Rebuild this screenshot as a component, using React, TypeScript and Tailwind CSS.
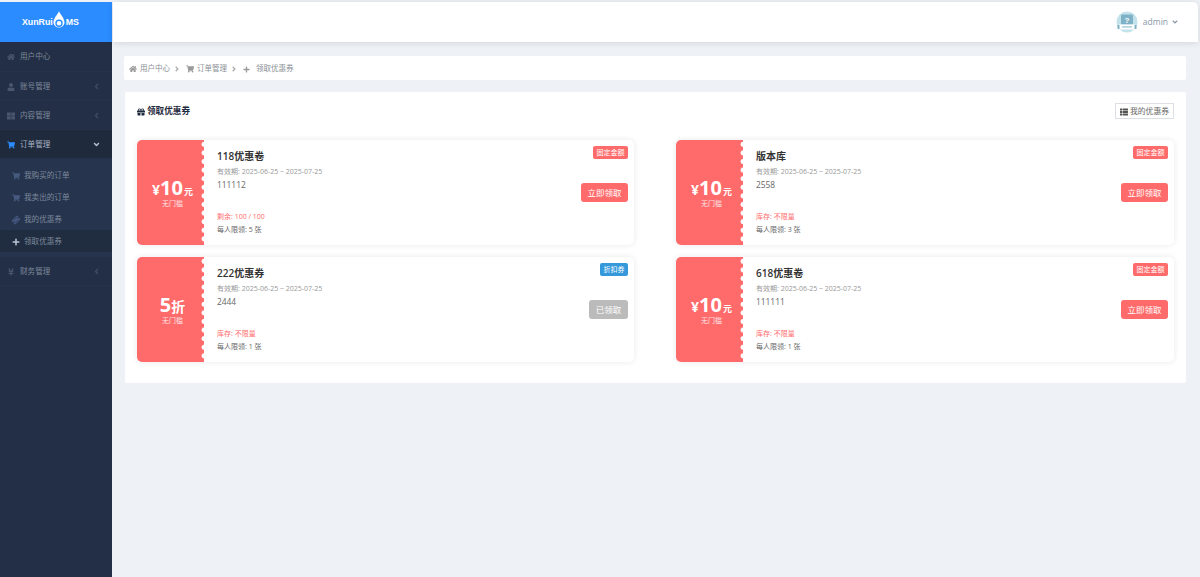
import React from "react";
import { FaHome, FaUser, FaThLarge, FaShoppingCart, FaTicketAlt, FaPlus, FaYenSign, FaGift, FaThList, FaAngleLeft, FaAngleDown, FaAngleRight } from "react-icons/fa";

const font = "[font-family:'Open_Sans','Noto_Sans_CJK_SC',sans-serif]";

function TopItem({ icon, label, arrow = true, active = false, h = "h-[29px]" }: { icon: React.ReactNode; label: string; arrow?: boolean; active?: boolean; h?: string }) {
  return (
    <div className={`flex items-center ${h} pt-[1px] pl-[7px] pr-[11px] border-b border-[#263249] ${active ? "bg-[#1f2a3d] text-[#a9b4c4]" : "text-[#7d899b]"}`}>
      <span className={`w-[13px] flex justify-start text-[8px] ${active ? "text-[#2a8cff]" : "text-[#4a566b]"}`}>{icon}</span>
      <span className="text-[7.6px] leading-none">{label}</span>
      {arrow && (
        <span className="ml-auto text-[9px]">
          {active ? <FaAngleDown className="text-[#b8c2d0]" /> : <FaAngleLeft className="text-[#3f4c62]" />}
        </span>
      )}
    </div>
  );
}

function SubItem({ icon, label, active = false }: { icon: React.ReactNode; label: string; active?: boolean }) {
  return (
    <div className={`flex items-center h-[22px] pt-[1px] pl-[12px] ${active ? "bg-[#202c40]" : ""}`}>
      <span className={`w-[12px] text-[8px] ${active ? "text-[#b9c4d3]" : "text-[#465a80]"}`}>{icon}</span>
      <span className="text-[7.6px] leading-none text-[#7d899b]">{label}</span>
    </div>
  );
}

function Sidebar() {
  return (
    <aside className="w-[112px] shrink-0 flex flex-col bg-[#232f46] mt-[2px]">
      <div className="h-[40px] bg-[#2a8cff] flex items-center justify-center pr-[11px] text-white font-bold text-[8.8px] [font-family:'Liberation_Sans',sans-serif]">
        <span className="mt-[2px]">XunRui</span>
        <svg width="14" height="19" viewBox="0 0 14 19" className="mt-[-3px] mx-[-0.5px]">
          <path d="M7 0 C7.6 3 12.5 6.5 12.5 12 A5.7 6 0 0 1 1.5 12 C1.5 6.5 6.4 3 7 0Z" fill="#fff" />
          <circle cx="7" cy="12.3" r="3" fill="none" stroke="#2a8cff" strokeWidth="1.4" />
        </svg>
        <span className="mt-[2px]">MS</span>
      </div>
      <TopItem icon={<FaHome />} label="用户中心" arrow={false} h="h-[30px]" />
      <TopItem icon={<FaUser />} label="账号管理" />
      <TopItem icon={<FaThLarge />} label="内容管理" />
      <TopItem icon={<FaShoppingCart />} label="订单管理" active />
      <div className="bg-[#26344e] py-[5px]">
        <SubItem icon={<FaShoppingCart />} label="我购买的订单" />
        <SubItem icon={<FaShoppingCart />} label="我卖出的订单" />
        <SubItem icon={<FaTicketAlt className="-rotate-45" />} label="我的优惠券" />
        <SubItem icon={<FaPlus />} label="领取优惠券" active />
      </div>
      <TopItem icon={<FaYenSign />} label="财务管理" />
    </aside>
  );
}

function Header() {
  return (
    <header className="h-[40px] mt-[2px] mr-[2px] bg-white rounded-tr-[5px] shadow-[0_1px_6px_rgba(0,0,0,0.12)] flex items-center justify-end pr-[19px]">
      <svg width="22" height="22" viewBox="0 0 22 22" className="mr-[5px]">
        <circle cx="11" cy="11" r="10.5" fill="#c3e2ec" />
        <rect x="5" y="3.5" width="12" height="10" rx="1" fill="#7fb2c6" />
        <text x="11" y="11.5" textAnchor="middle" fontSize="8" fontWeight="700" fill="#fff" fontFamily="Liberation Sans">?</text>
        <rect x="2.5" y="13.5" width="17" height="5" rx="1" fill="#fff" />
        <rect x="1.5" y="14" width="2" height="4" fill="#7fb2c6" />
        <rect x="18.5" y="14" width="2" height="4" fill="#7fb2c6" />
        <rect x="6" y="15.2" width="10" height="1.4" fill="#a5cbd8" />
      </svg>
      <span className="text-[8.5px] text-[#8a98ab]">admin</span>
      <FaAngleDown className="text-[8px] text-[#8a98ab] ml-[3px]" />
    </header>
  );
}

function Crumb() {
  return (
    <div className="h-[24px] mr-[14px] ml-[11px] mt-[14px] pt-[2px] bg-white rounded-[2px] flex items-center pl-[5px] text-[7.5px] text-[#8a8f96]">
      <FaHome className="text-[8px] text-[#999] mr-[3px]" />
      <span>用户中心</span>
      <FaAngleRight className="text-[8px] text-[#aaa] mx-[3px]" />
      <FaShoppingCart className="text-[8px] text-[#999] mr-[3px] ml-[2px]" />
      <span>订单管理</span>
      <FaAngleRight className="text-[8px] text-[#aaa] mx-[3px]" />
      <FaPlus className="text-[7px] text-[#999] mr-[6px] ml-[2px]" />
      <span>领取优惠券</span>
    </div>
  );
}

type C = { name: string; code: string; amount: React.ReactNode; tag: string; blue?: boolean; stock: string; limit: string; taken?: boolean };

function Coupon({ c }: { c: C }) {
  return (
    <div className="relative h-[105px] flex bg-white rounded-[5px] shadow-[0_0_6px_rgba(0,0,0,0.09)]">
      <div className="relative w-[67px] shrink-0 bg-[#ff6b6b] rounded-l-[5px] flex flex-col items-center justify-center text-white pl-[4px] pb-[1px]">
        <div className="leading-none font-semibold flex items-baseline">{c.amount}</div>
        <div className="text-[7px] leading-none mt-[2px] text-[#ffe3e3]">无门槛</div>
        <div className="absolute right-0 top-0 bottom-0 w-[3px] bg-[radial-gradient(circle_at_100%_50%,#ffffff_2.2px,transparent_2.8px)] bg-[length:3px_8.6px]" />
      </div>
      <div className="flex-1 min-w-0 pl-[13px] pt-[10px] flex flex-col">
        <div className="text-[10px] leading-[13px] font-semibold text-[#333]">{c.name}</div>
        <div className="text-[7px] leading-[10px] mt-[4px] text-[#999]">有效期: 2025-06-25 ~ 2025-07-25</div>
        <div className="text-[8.4px] leading-[11px] mt-[2px] text-[#666]">{c.code}</div>
        <div className="text-[7px] leading-[10px] mt-[22px] text-[#ff6b6b]">{c.stock}</div>
        <div className="text-[7px] leading-[10px] mt-[3px] text-[#666]">{c.limit}</div>
      </div>
      <span className={`absolute top-[6px] right-[6px] h-[13px] px-[3.5px] rounded-[2px] text-white text-[7px] leading-[13px] ${c.blue ? "bg-[#3498db]" : "bg-[#ff6b6b]"}`}>{c.tag}</span>
      <span className={`absolute top-[43px] right-[6px] h-[19px] rounded-[3px] text-white text-[8.5px] leading-[19px] text-center ${c.taken ? "w-[39px] bg-[#bbbbbb]" : "w-[47px] bg-[#ff6b6b]"}`}>{c.taken ? "已领取" : "立即领取"}</span>
    </div>
  );
}

const yen = (
  <>
    <span className="text-[14px] font-bold">¥</span>
    <span className="text-[20px] font-bold">10</span>
    <span className="text-[9px] ml-[1px]">元</span>
  </>
);

const data: C[] = [
  { name: "118优惠卷", code: "111112", amount: yen, tag: "固定金额", stock: "剩余: 100 / 100", limit: "每人限领: 5 张" },
  { name: "版本库", code: "2558", amount: yen, tag: "固定金额", stock: "库存: 不限量", limit: "每人限领: 3 张" },
  {
    name: "222优惠券",
    code: "2444",
    amount: (
      <>
        <span className="text-[20px] font-bold">5</span>
        <span className="text-[14px]">折</span>
      </>
    ),
    tag: "折扣券",
    blue: true,
    stock: "库存: 不限量",
    limit: "每人限领: 1 张",
    taken: true,
  },
  { name: "618优惠卷", code: "111111", amount: yen, tag: "固定金额", stock: "库存: 不限量", limit: "每人限领: 1 张" },
];

export default function App() {
  return (
    <div className={`h-[577px] overflow-hidden flex bg-[#eef1f6] ${font}`}>
      <Sidebar />
      <main className="flex-1 min-w-0 ml-[1px]">
        <Header />
        <Crumb />
        <section className="ml-[12px] mr-[14px] mt-[12px] h-[291px] bg-white rounded-[2px] px-[12px]">
          <div className="flex items-start justify-between h-[48px] pt-[11px]">
            <div className="flex items-center h-[16px] pt-[1px] text-[#1f2a3d] text-[8.6px] font-semibold">
              <FaGift className="text-[8px] mr-[2px]" />
              <span>领取优惠券</span>
            </div>
            <span className="flex items-center h-[16px] w-[59px] pt-[1px] justify-center border border-[#dcdfe4] text-[7.8px] text-[#666]">
              <FaThList className="text-[8px] mr-[2px] text-[#555]" />
              我的优惠券
            </span>
          </div>
          <div className="grid grid-cols-[497px_498px] gap-x-[42px] gap-y-[12px]">
            {data.map((c) => (
              <Coupon key={c.name} c={c} />
            ))}
          </div>
        </section>
      </main>
    </div>
  );
}
